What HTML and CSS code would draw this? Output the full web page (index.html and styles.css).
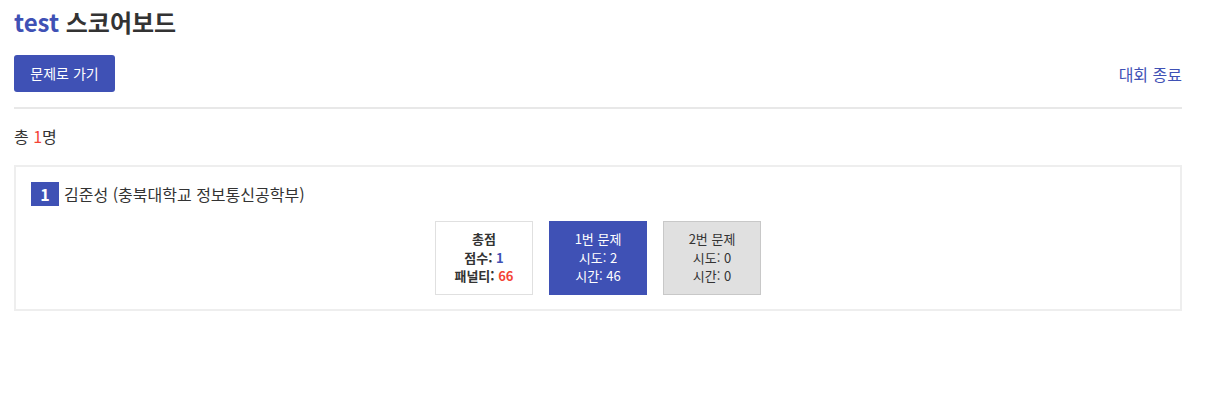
FILE: index.html
```html
<!DOCTYPE html>
<html lang="ko">
<head>
<meta charset="utf-8">
<title>test 스코어보드</title>
<link rel="stylesheet" href="styles.css">
</head>
<body>
<div class="page">
  <h1 class="title"><span class="contest">test</span> 스코어보드</h1>
  <div class="toolbar">
    <a class="btn" href="#">문제로 가기</a>
    <a class="end-link" href="#">대회 종료</a>
  </div>
  <p class="count">총 <span class="red">1</span>명</p>
  <div class="card">
    <div class="user">
      <span class="rank">1</span>
      <span class="name">김준성 (충북대학교 정보통신공학부)</span>
    </div>
    <div class="boxes">
      <div class="box total">
        <div>총점</div>
        <div>점수: <span class="blue">1</span></div>
        <div>패널티: <span class="red">66</span></div>
      </div>
      <div class="box solved">
        <div>1번 문제</div>
        <div>시도: 2</div>
        <div>시간: 46</div>
      </div>
      <div class="box unsolved">
        <div>2번 문제</div>
        <div>시도: 0</div>
        <div>시간: 0</div>
      </div>
    </div>
  </div>
</div>
</body>
</html>
```
FILE: styles.css
```css
* { box-sizing: border-box; }
html, body { margin: 0; padding: 0; background: #fff; }
body {
  font-family: "Noto Sans CJK KR", "Noto Sans", sans-serif;
  color: #333;
}
.page {
  width: 1168px;
  margin-left: 14px;
  padding-top: 4px;
}
.title {
  margin: 0;
  font-size: 24px;
  font-weight: 700;
  line-height: 36px;
  color: #333;
}
.contest { color: #3f51b5; }
.toolbar {
  margin-top: 15px;
  display: flex;
  align-items: center;
  justify-content: space-between;
  padding-bottom: 15px;
  border-bottom: 2px solid #e8e8e8;
}
.btn {
  display: inline-block;
  background: #3f51b5;
  color: #fff;
  text-decoration: none;
  font-size: 14px;
  line-height: 21px;
  padding: 8px 16px;
  border-radius: 3px;
  width: 101px;
  text-align: center;
}
.end-link {
  color: #3f51b5;
  text-decoration: none;
  font-size: 16px;
  line-height: 24px;
}
.count {
  margin: 15px 0 0;
  font-size: 16px;
  line-height: 24px;
}
.red { color: #f44336; }
.blue { color: #3f51b5; }
.card {
  margin-top: 17px;
  border: 2px solid #eeeeee;
  padding: 15px 15px 14px;
}
.user {
  display: flex;
  align-items: center;
  gap: 5px;
}
.rank {
  display: inline-block;
  background: #3f51b5;
  color: #fff;
  font-weight: 700;
  font-size: 16px;
  line-height: 24px;
  width: 28px;
  text-align: center;
}
.name {
  font-size: 16px;
  line-height: 24px;
}
.boxes {
  margin-top: 15px;
  display: flex;
  justify-content: center;
  gap: 16px;
}
.box {
  width: 98px;
  height: 74px;
  padding: 8px 0;
  text-align: center;
  font-size: 13px;
  line-height: 18.5px;
  border: 1px solid #e0e0e0;
}
.total { font-weight: 700; background: #fff; }
.solved { background: #3f51b5; color: #fff; border-color: #3f51b5; }
.unsolved { background: #e0e0e0; color: #333; border-color: #c8c8c8; }
```
